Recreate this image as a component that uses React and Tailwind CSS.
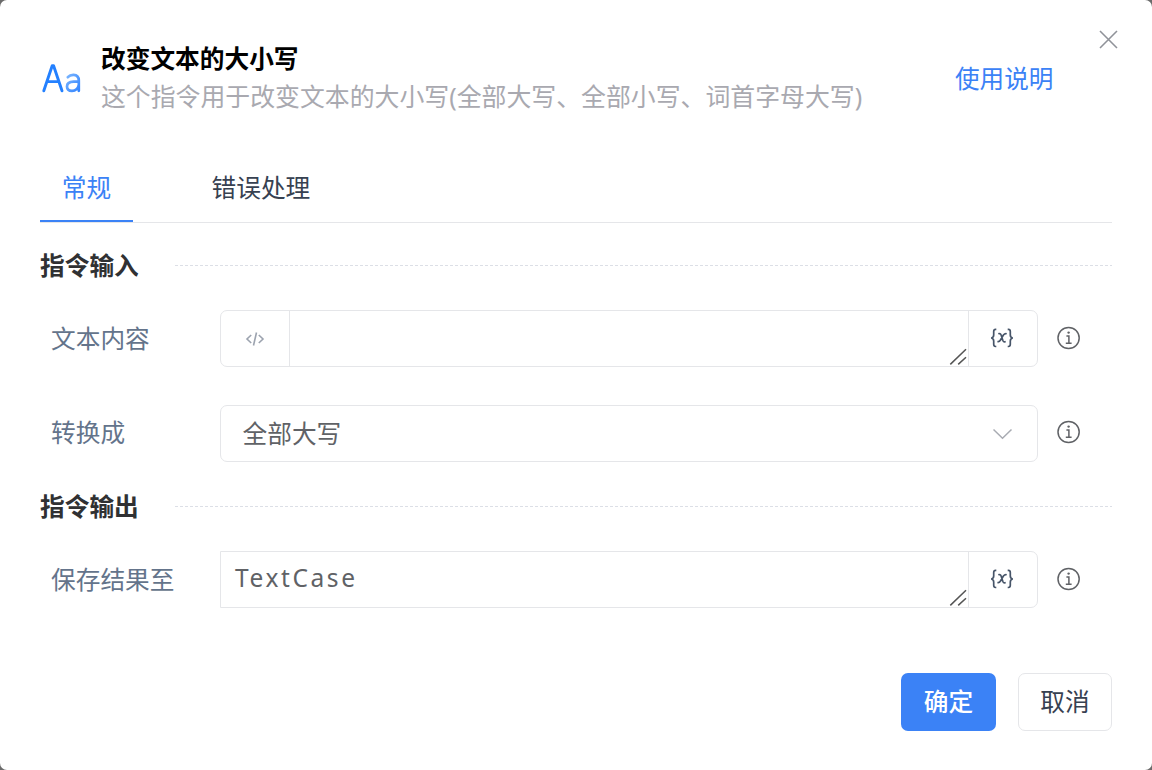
import React from "react";

const FONT = "font-['Noto_Sans','Noto_Sans_CJK_SC',sans-serif]";

function InfoIcon({ className }) {
  return (
    <svg className={`${className} ml-[19px] block h-6 w-6 shrink-0`} viewBox="0 0 24 24" fill="none" stroke="#606266" strokeWidth="1.5">
      <circle cx="11.6" cy="12" r="10.6" />
      <path d="M9.4 10.1H11.9V17M8.8 17.3H14.6" />
      <circle cx="11.6" cy="6.6" r="1.2" fill="#606266" stroke="none" />
    </svg>
  );
}

function VarIcon() {
  return (
    <svg className="mr-[2px] mb-px h-5 w-6" viewBox="0 0 24 20" fill="none" stroke="#475569" strokeWidth="1.7">
      <path d="M6.3 1.3H5.6Q3.7 1.3 3.7 3.5V7Q3.7 9.6 1.2 10Q3.7 10.4 3.7 13V16.3Q3.7 18.5 5.6 18.5H6.3" />
      <path d="M17.7 1.3H18.4Q20.3 1.3 20.3 3.5V7Q20.3 9.6 22.8 10Q20.3 10.4 20.3 13V16.3Q20.3 18.5 18.4 18.5H17.7" />
      <path d="M8.3 5.8Q10.4 5 11.2 7.2L12.8 12.3Q13.6 14.6 15.7 13.5M16.7 5.7Q14.8 5.2 13.4 7L10.5 12Q9.3 14 7.4 13.5" />
    </svg>
  );
}

function Grip() {
  return (
    <svg className="absolute right-0 bottom-0 h-[18px] w-[20px]" viewBox="0 0 20 18" fill="none" stroke="#555" strokeWidth="1.5">
      <path d="M2.3 16.4L18 1.2M10.2 16.4L18 9.2" />
    </svg>
  );
}

function VarButton() {
  return (
    <button className="flex w-[69px] shrink-0 items-center justify-center border-l border-[#e5e6e9]">
      <VarIcon />
    </button>
  );
}

function Section({ children }) {
  return (
    <div className="flex h-9 items-center">
      <h2 className="w-[135px] shrink-0 text-[24.7px] font-bold text-[#303133]">{children}</h2>
      <svg className="mb-[2px] h-px flex-1" preserveAspectRatio="none">
        <line x1="0" y1=".5" x2="100%" y2=".5" stroke="#dcdfe6" strokeDasharray="3 2" />
      </svg>
    </div>
  );
}

function Row({ label, raised, children }) {
  return (
    <div className="flex h-[57px] items-center">
      <div className={`${raised ? "pb-px" : "pt-px"} w-[180px] shrink-0 pl-[11px] text-[24.7px] whitespace-nowrap text-[#64748b]`}>{label}</div>
      {children}
      <InfoIcon className={raised ? "mb-[3px]" : "mb-px"} />
    </div>
  );
}

export default function App() {
  return (
    <div className="h-[770px] w-[1152px] bg-[#6b6b6b]">
      <main className={`flex h-full flex-col rounded-[7px] bg-white px-10 leading-9 ${FONT}`}>
        <header className="flex h-[154px] shrink-0 pt-10">
          <svg className="mt-[22px] h-[32px] w-[42px] shrink-0" viewBox="0 0 42 32" fill="none" strokeLinecap="round" strokeLinejoin="round">
            <defs>
              <linearGradient id="a" x1="0" y1="0" x2="1" y2="1">
                <stop stopColor="#7ab5ff" />
                <stop offset="1" stopColor="#3385ff" />
              </linearGradient>
            </defs>
            <path d="M3.8 28.8L12.2 3.7H13.6L22 28.8M7 19.6H19" stroke="#2380ff" strokeWidth="2.9" />
            <path d="M27.8 15.2Q30 12.8 33.5 12.9Q38.8 13.2 38.8 18.6V28.8M38.8 19.7H33.5Q27 20 27 24.4Q27 28.8 32 28.8Q37.5 28.8 38.8 23" stroke="url(#a)" strokeWidth="2.7" />
          </svg>
          <div className="ml-[19px] w-[854px] shrink-0 whitespace-nowrap">
            <h1 className="text-[24.7px] leading-[38px] font-bold text-black">改变文本的大小写</h1>
            <p className="text-[24.88px] leading-[36px] text-[#a9a9b0]">这个指令用于改变文本的大小写(全部大写、全部小写、词首字母大写)</p>
          </div>
          <a className="mt-[21px] w-[100px] shrink-0 text-[24.6px] whitespace-nowrap text-[#3b82f6]">使用说明</a>
          <button className="-mt-[11px] ml-[43px] h-[20px] w-[20px] shrink-0" aria-label="关闭">
            <svg className="block h-5 w-5" viewBox="0 0 20 20" stroke="#909399" strokeWidth="1.6">
              <path d="M2 2L19 19M19 2L2 19" />
            </svg>
          </button>
        </header>
        <nav className="flex h-[69px] shrink-0 border-b border-[#e5e6e9] text-[24.7px]">
          <div className="h-[68px] w-[93px] border-b-2 border-[#3b82f6] pt-4 text-center text-[#3b82f6]">常规</div>
          <div className="ml-[78.5px] pt-4 text-[#374151]">错误处理</div>
        </nav>
        <section className="pt-[25px]">
          <Section>指令输入</Section>
          <div className="mt-[26px] flex flex-col gap-[38px]">
            <Row label="文本内容">
              <div className="flex h-[57px] w-[818px] rounded-[7px] border border-[#e5e6e9]">
                <div className="flex w-[69px] items-center justify-center border-r border-[#e5e6e9]">
                  <svg className="h-[14px] w-[20px]" viewBox="0 0 20 14" fill="none" stroke="#9ca3af" strokeWidth="1.6">
                    <path d="M6.2 3L2 7L6.2 11M13.8 3L18 7L13.8 11M11.5 .5L8.5 13.5" />
                  </svg>
                </div>
                <div className="relative flex-1"><Grip /></div>
                <VarButton />
              </div>
            </Row>
            <Row label="转换成" raised>
              <div className="flex h-[57px] w-[818px] items-center justify-between rounded-[7px] border border-[#e5e6e9] pr-6 pl-[21.5px] text-[24.7px] text-[#606266]">
                全部大写
                <svg className="h-[12px] w-5" viewBox="0 0 20 12" fill="none" stroke="#a8abb2" strokeWidth="1.5">
                  <path d="M.5 1.5L9.5 10.2L18.5 1.5" />
                </svg>
              </div>
            </Row>
          </div>
        </section>
        <section className="pt-[27px]">
          <Section>指令输出</Section>
          <div className="mt-[26px]">
            <Row label="保存结果至">
              <div className="flex h-[57px] w-[818px] rounded-r-[7px] border border-[#e5e6e9]">
                <div className="relative flex-1 pt-2 pl-[14px] text-[24.5px] tracking-[2.6px] text-[#606266]">
                  TextCase
                  <Grip />
                </div>
                <VarButton />
              </div>
            </Row>
          </div>
        </section>
        <footer className="mt-[65px] flex justify-end gap-[22px] text-[24.7px]">
          <button className="h-[58px] w-[95px] rounded-[7px] bg-[#3b82f6] font-medium text-white">确定</button>
          <button className="h-[58px] w-[94px] rounded-[7px] border border-[#e5e6e9] text-[#374151]">取消</button>
        </footer>
      </main>
    </div>
  );
}
